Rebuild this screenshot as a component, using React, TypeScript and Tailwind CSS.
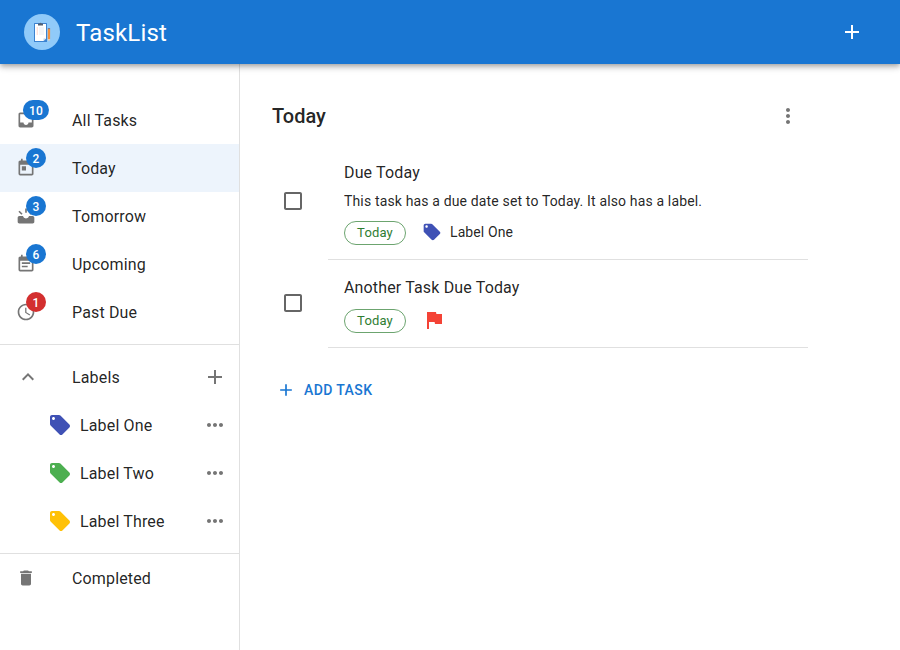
import type { ComponentType, ReactNode } from "react";
import {
  MdAccessTime,
  MdAdd,
  MdCheckBoxOutlineBlank,
  MdDelete,
  MdEventNote,
  MdExpandLess,
  MdFlag,
  MdInbox,
  MdLocalOffer,
  MdMoreHoriz,
  MdMoreVert,
  MdToday,
} from "react-icons/md";

type NavItem = {
  label: string;
  count: number;
  Icon: ComponentType<{ size?: number | string }>;
  active?: boolean;
  error?: boolean;
};

function UpcomingIcon({ size = 20 }: { size?: number | string }) {
  return (
    <svg width={size} height={size} viewBox="0 0 24 24" fill="currentColor">
      <path d="M4 12h4.3a3.8 3.8 0 0 0 7.4 0H20c1.1 0 2 .9 2 2v5c0 1.1-.9 2-2 2H4c-1.1 0-2-.9-2-2v-5c0-1.1.9-2 2-2z" />
      <path d="M11 3h2v5h-2zM4.3 5.6l3.6 3.6-1.4 1.4L2.9 7zM19.7 5.6L21.1 7l-3.6 3.6-1.4-1.4z" />
    </svg>
  );
}

const navItems: NavItem[] = [
  { label: "All Tasks", count: 10, Icon: MdInbox },
  { label: "Today", count: 2, Icon: MdToday, active: true },
  { label: "Tomorrow", count: 3, Icon: UpcomingIcon },
  { label: "Upcoming", count: 6, Icon: MdEventNote },
  { label: "Past Due", count: 1, Icon: MdAccessTime, error: true },
];

const labels = [
  { name: "Label One", color: "text-[#3f51b5]" },
  { name: "Label Two", color: "text-[#4caf50]" },
  { name: "Label Three", color: "text-[#ffc107]" },
];

function Logo() {
  return (
    <svg width="36" height="36" viewBox="0 0 36 36">
      <circle cx="18" cy="18" r="18" fill="#90caf9" />
      <rect x="10" y="9" width="13" height="19" rx=".5" fill="#3b82d0" />
      <path d="M11 10h11v14.5L19.5 27H11z" fill="#fff" />
      <path d="M22 24.5h-2.5V27z" fill="#b9d3ee" />
      <path d="M14 11.6V9.4h1.5a1.1 1.1 0 0 1 2 0H19v2.2z" fill="#546073" />
      <path d="M12.7 14h1.2M12.7 16h1.2M12.7 18h1.2M12.7 20h1.2" stroke="#ffb4a0" strokeWidth=".9" />
      <path d="M15 14h5M15 16h5M15 18h5M15 20h5" stroke="#e1e6ee" strokeWidth=".8" />
      <rect x="23.8" y="15" width="2.3" height="10" fill="#f5923f" />
      <rect x="23.8" y="14" width="2.3" height="1.2" fill="#7b7c94" />
      <path d="M23.8 25h2.3L25 27.5z" fill="#f7cfa5" />
    </svg>
  );
}

function NavRow({ label, count, Icon, active, error }: NavItem) {
  return (
    <li className={`flex h-12 items-center pl-4 ${active ? "bg-[#edf4fc]" : ""}`}>
      <span className="relative mr-9 size-5 text-[#757575]">
        <Icon size={20} />
        <span
          className={`absolute top-0 right-0 flex h-5 min-w-5 translate-x-1/2 -translate-y-1/2 items-center justify-center rounded-full px-1.5 pt-0.5 text-xs leading-none font-medium tracking-[0.14px] text-white ${error ? "bg-[#d32f2f]" : "bg-[#1976d2]"}`}
        >
          {count}
        </span>
      </span>
      <span className="pt-0.5">{label}</span>
    </li>
  );
}

function Task({ title, note, children }: { title: string; note?: string; children: ReactNode }) {
  return (
    <li className="flex items-center pl-[9px]">
      <MdCheckBoxOutlineBlank size={24} className="mr-[23px] mb-0.5 shrink-0 text-[#666]" />
      <div className={`flex-1 border-b border-[#e0e0e0] px-4 pb-3.5 ${note ? "pt-[17px]" : "pt-4"}`}>
        <div className="leading-6">{title}</div>
        {note && <div className="mt-1.5 text-sm leading-5">{note}</div>}
        <div className={`flex h-6 items-center ${note ? "mt-2.5" : "mt-[9px]"}`}>
          <span className="mr-4 flex h-6 w-[62px] items-center justify-center rounded-full border border-[#2e7d32]/70 text-[13px] text-[#2e7d32]">
            Today
          </span>
          <div className="flex items-center pb-0.5">{children}</div>
        </div>
      </div>
    </li>
  );
}

export default function App() {
  return (
    <div className="flex h-[650px] w-[900px] flex-col overflow-hidden bg-white font-[Roboto,sans-serif] text-base tracking-[0.15px] text-black/87">
      <header className="z-10 flex h-16 shrink-0 items-center bg-[#1976d2] px-6 text-white shadow-[0_2px_4px_-1px_rgba(0,0,0,0.2),0_4px_5px_0_rgba(0,0,0,0.14),0_1px_10px_0_rgba(0,0,0,0.12)]">
        <Logo />
        <h1 className="ml-4 flex-1 pt-0.5 text-2xl tracking-[0.18px]">TaskList</h1>
        <MdAdd size={24} className="mr-3" />
      </header>
      <div className="flex flex-1">
        <nav className="w-60 shrink-0 border-r border-[#e0e0e0] pt-8">
          <ul className="pb-2">
            {navItems.map((item) => (
              <NavRow key={item.label} {...item} />
            ))}
          </ul>
          <div className="border-y border-[#e0e0e0] py-2">
            <div className="flex h-12 items-center pr-3 pl-4">
              <MdExpandLess size={24} className="mr-8 text-[#757575]" />
              <span className="flex-1 pt-0.5">Labels</span>
              <MdAdd size={24} className="text-[#757575]" />
            </div>
            <ul>
              {labels.map(({ name, color }) => (
                <li key={name} className="flex h-12 items-center pr-3 pl-12">
                  <MdLocalOffer size={24} className={`mr-2 ${color}`} />
                  <span className="flex-1 pt-0.5">{name}</span>
                  <MdMoreHoriz size={24} className="text-[#757575]" />
                </li>
              ))}
            </ul>
          </div>
          <div className="flex h-12 items-center pl-4">
            <MdDelete size={20} className="mr-9 text-[#757575]" />
            <span className="pt-0.5">Completed</span>
          </div>
        </nav>
        <main className="ml-8 w-[536px] pt-8">
          <div className="flex h-10 items-center justify-between pr-2">
            <h2 className="text-xl font-medium tracking-normal">Today</h2>
            <MdMoreVert size={24} className="text-[#757575]" />
          </div>
          <ul className="mt-2">
            <Task title="Due Today" note="This task has a due date set to Today. It also has a label.">
              <MdLocalOffer size={20} className="mr-2 text-[#3f51b5]" />
              <span className="text-sm tracking-[0.1px]">Label One</span>
            </Task>
            <Task title="Another Task Due Today">
              <MdFlag size={24} className="text-[#f44336]" />
            </Task>
          </ul>
          <button className="mt-6 flex h-9 items-center pl-1 text-sm font-medium tracking-[0.4px] text-[#1976d2] uppercase">
            <MdAdd size={20} className="mr-2" />
            Add task
          </button>
        </main>
      </div>
    </div>
  );
}
